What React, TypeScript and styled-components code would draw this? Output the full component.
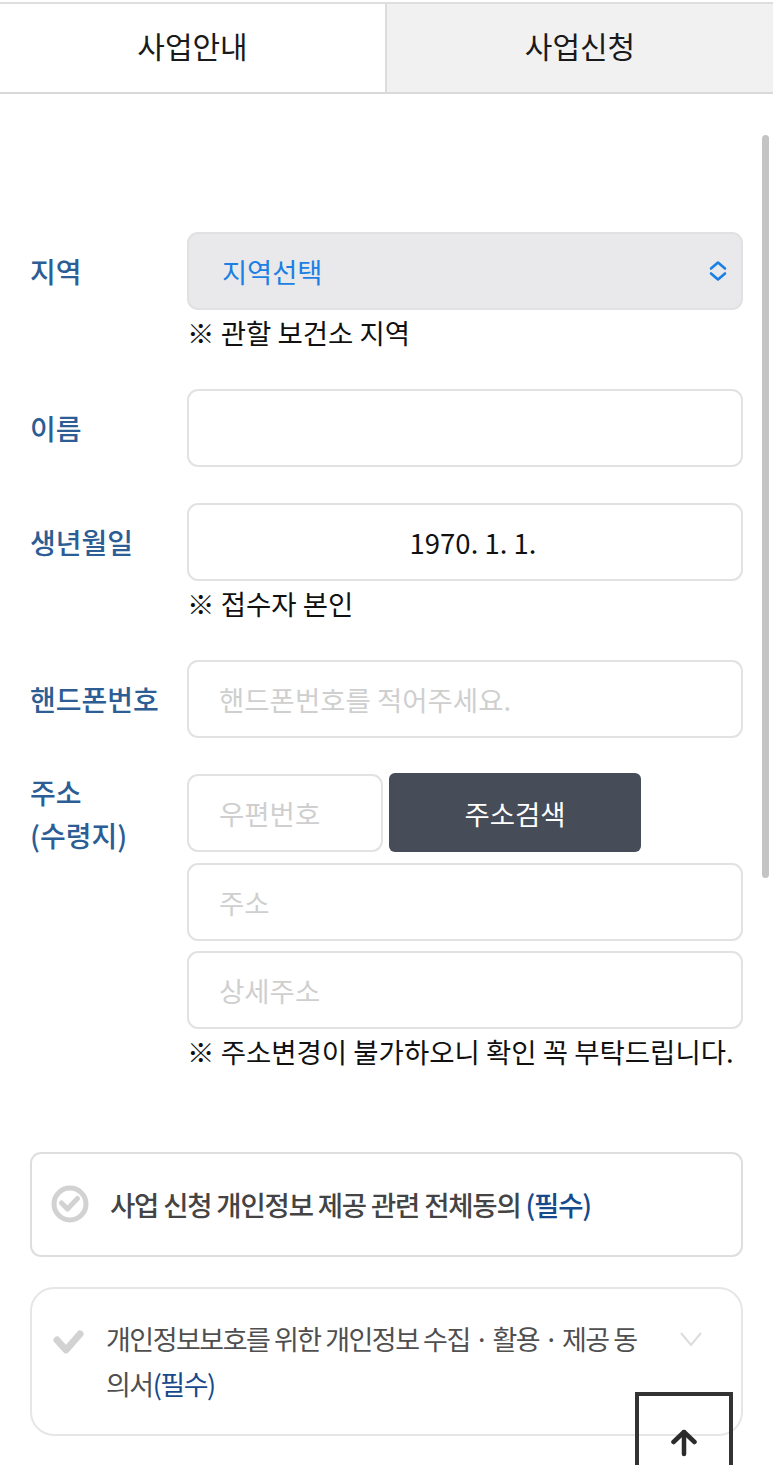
import React from 'react';
import styled, { createGlobalStyle } from 'styled-components';

const GlobalStyle = createGlobalStyle`
  html, body {
    margin: 0;
    padding: 0;
    background: #fff;
  }

  body {
    font-family: "Noto Sans CJK KR", "Noto Sans", sans-serif;
    color: #111;
  }

  * {
    box-sizing: border-box;
  }
`;

const Page = styled.div`
  position: relative;
  width: 773px;
  height: 1465px;
  overflow: hidden;
  padding-top: 2px;
  background: #fff;
`;

const Tabs = styled.div`
  display: grid;
  grid-template-columns: 387px 1fr;
  height: 92px;
  border-top: 2px solid #dedede;
  border-bottom: 2px solid #d9d9d9;
`;

const Tab = styled.div<{ $active?: boolean }>`
  display: flex;
  align-items: center;
  justify-content: center;
  padding-bottom: 7px;
  font-size: 30px;
  color: #1a1a1a;
  background: ${(p) => (p.$active ? '#fff' : '#f1f1f1')};
  border-right: ${(p) => (p.$active ? '2px solid #dcdcdc' : 'none')};
`;

const Form = styled.form`
  padding: 138px 30px 0;
`;

const Row = styled.div<{ $gap?: number }>`
  display: grid;
  grid-template-columns: 157px 556px;
  margin-bottom: ${(p) => p.$gap ?? 36}px;
`;

const Label = styled.label<{ $top?: boolean }>`
  font-size: 28px;
  font-weight: 500;
  line-height: 43px;
  color: #2c5d94;
  margin-top: ${(p) => (p.$top ? -3 : 0)}px;
  padding-top: ${(p) => (p.$top ? 0 : 18)}px;
`;

const Field = styled.div`
  display: flex;
  flex-direction: column;
  gap: 10.5px;
`;

const Input = styled.input<{ $center?: boolean }>`
  width: 100%;
  height: 78px;
  padding: 0 30px 0 ${(p) => (p.$center ? 46 : 30)}px;
  border: 2px solid #e2e2e2;
  border-radius: 11px;
  background: #fff;
  font-family: inherit;
  font-size: 27.5px;
  color: #111;
  text-align: ${(p) => (p.$center ? 'center' : 'left')};
  outline: none;

  &::placeholder {
    color: #cfcfcf;
    opacity: 1;
  }
`;

const SelectWrap = styled.div`
  position: relative;
  height: 78px;
`;

const Select = styled.select`
  width: 100%;
  height: 100%;
  padding: 0 33px;
  appearance: none;
  border: 2px solid #e1e1e3;
  border-radius: 11px;
  background: #e9e9eb;
  font-family: inherit;
  font-size: 27.3px;
  color: #1b7fe3;
  outline: none;
`;

const SelectArrows = styled.svg`
  position: absolute;
  top: 28px;
  right: 15px;
  width: 20px;
  height: 22px;
  pointer-events: none;
`;

const Note = styled.p`
  margin: 0;
  height: 47px;
  font-size: 27.5px;
  line-height: 45px;
  color: #111;
  white-space: nowrap;
`;

const ZipRow = styled.div`
  display: flex;
  gap: 6px;
`;

const ZipInput = styled(Input)`
  width: 196px;
`;

const SearchButton = styled.button`
  width: 252px;
  height: 79px;
  margin-top: -1px;
  border: none;
  border-radius: 6px;
  background: #464c58;
  font-family: inherit;
  font-size: 27.5px;
  color: #fff;
`;

const Agreements = styled.section`
  display: flex;
  flex-direction: column;
  gap: 30px;
  margin-top: 76px;
  width: 713px;
`;

const AllAgree = styled.div`
  display: flex;
  align-items: center;
  gap: 21px;
  height: 105px;
  padding: 0 0 2px 19px;
  border: 2px solid #dedede;
  border-radius: 11px;
  font-size: 27.5px;
  font-weight: 500;
  letter-spacing: -1.2px;
  color: #444;
`;

const Required = styled.span`
  color: #174a8c;
`;

const TermCard = styled.div`
  display: flex;
  align-items: flex-start;
  height: 149px;
  padding: 27px 38px 0 21px;
  border: 2px solid #e6e6e6;
  border-radius: 24px;
`;

const TermText = styled.div`
  flex: 1;
  margin-left: 21px;
  font-size: 27px;
  line-height: 45px;
  letter-spacing: -1.5px;
  color: #4f4f4f;
  word-break: break-all;
`;

const TermCheck = styled.svg`
  flex: none;
  width: 32px;
  height: 26px;
  margin-top: 14px;
`;

const TermChevron = styled.svg`
  flex: none;
  width: 24px;
  height: 16px;
  margin: 15px 0 0 30px;
`;

const Scrollbar = styled.div`
  position: absolute;
  top: 135px;
  right: 4px;
  width: 7px;
  height: 743px;
  border-radius: 4px;
  background: #c4c4c4;
`;

const TopButton = styled.button`
  position: absolute;
  top: 1392px;
  left: 635px;
  display: flex;
  align-items: flex-start;
  justify-content: center;
  width: 98px;
  height: 90px;
  padding: 33px 0 0;
  border: 4px solid #333;
  background: transparent;
`;

const App: React.FC = () => {
  return (
    <Page>
      <GlobalStyle />
      <Tabs>
        <Tab $active>사업안내</Tab>
        <Tab>사업신청</Tab>
      </Tabs>

      <Form>
        <Row $gap={32}>
          <Label>지역</Label>
          <div>
            <SelectWrap>
              <Select defaultValue="">
                <option value="">지역선택</option>
              </Select>
              <SelectArrows viewBox="0 0 20 22" fill="none" stroke="#1b7fe3" strokeWidth="2.6" strokeLinecap="round" strokeLinejoin="round">
                <path d="M3 8.5 L10 2.5 L17 8.5" />
                <path d="M3 13.5 L10 19.5 L17 13.5" />
              </SelectArrows>
            </SelectWrap>
            <Note>※ 관할 보건소 지역</Note>
          </div>
        </Row>

        <Row>
          <Label>이름</Label>
          <Field>
            <Input />
          </Field>
        </Row>

        <Row $gap={32}>
          <Label>생년월일</Label>
          <div>
            <Input $center readOnly value="1970. 1. 1." />
            <Note>※ 접수자 본인</Note>
          </div>
        </Row>

        <Row>
          <Label>핸드폰번호</Label>
          <Field>
            <Input placeholder="핸드폰번호를 적어주세요." />
          </Field>
        </Row>

        <Row $gap={0}>
          <Label $top>
            주소
            <br />
            (수령지)
          </Label>
          <div>
            <Field>
              <ZipRow>
                <ZipInput placeholder="우편번호" />
                <SearchButton type="button">주소검색</SearchButton>
              </ZipRow>
              <Input placeholder="주소" />
              <Input placeholder="상세주소" />
            </Field>
            <Note>※ 주소변경이 불가하오니 확인 꼭 부탁드립니다.</Note>
          </div>
        </Row>

        <Agreements>
          <AllAgree>
            <svg width="38" height="38" viewBox="0 0 38 38" fill="none" stroke="#d2d2d2" strokeLinecap="round" strokeLinejoin="round">
              <circle cx="19" cy="19" r="16" strokeWidth="5" />
              <path d="M10.5 18 L16.5 24 L26.5 13.5" strokeWidth="5" />
            </svg>
            <span>
              사업 신청 개인정보 제공 관련 전체동의 <Required>(필수)</Required>
            </span>
          </AllAgree>

          <TermCard>
            <TermCheck viewBox="0 0 32 26" fill="none">
              <path d="M4 10 L13 20 L27 4" stroke="#d2d2d2" strokeWidth="7" strokeLinecap="round" strokeLinejoin="round" />
            </TermCheck>
            <TermText>
              개인정보보호를 위한 개인정보 수집 · 활용 · 제공 동의서<Required>(필수)</Required>
            </TermText>
            <TermChevron viewBox="0 0 24 16" fill="none">
              <path d="M2 2 L12 14 L22 2" stroke="#dcdcdc" strokeWidth="2" />
            </TermChevron>
          </TermCard>
        </Agreements>
      </Form>

      <Scrollbar />

      <TopButton type="button" aria-label="맨 위로">
        <svg width="26" height="28" viewBox="0 0 26 28" fill="none" stroke="#2b2b2b" strokeWidth="4.5" strokeLinecap="round" strokeLinejoin="round">
          <path d="M13 25 V3" />
          <path d="M2.5 13 L13 3 L23.5 13" />
        </svg>
      </TopButton>
    </Page>
  );
};

export default App;
